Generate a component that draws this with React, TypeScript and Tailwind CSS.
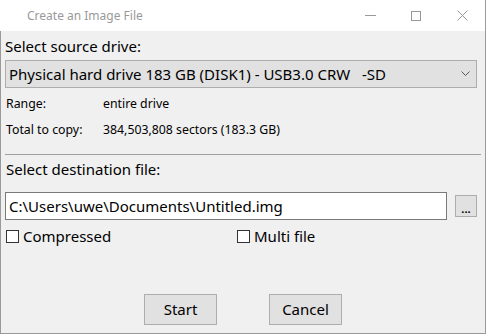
import React from "react"

const font = { fontFamily: '"Noto Sans", "Open Sans", sans-serif' }

function Checkbox({ label }: { label: string }) {
  return (
    <label className="flex items-center gap-[4px] text-[15px] leading-[20px] text-black">
      <span className="w-[13px] h-[13px] border border-[#333] bg-white" />
      {label}
    </label>
  )
}

export default function App() {
  return (
    <div className="w-[486px] h-[334px] bg-white border-r border-[#9a9a9a] flex flex-col overflow-hidden" style={font}>
      {/* title bar */}
      <div className="h-[31px] flex items-center bg-white">
        <span className="ml-[27px] text-[12px] text-[#999]">Create an Image File</span>
        <div className="ml-auto flex items-center h-full">
          <div className="w-[46px] h-full flex items-center justify-center">
            <div className="w-[11px] h-px bg-[#999]" />
          </div>
          <div className="w-[46px] h-full flex items-center justify-center">
            <div className="w-[10px] h-[10px] border border-[#999]" />
          </div>
          <div className="w-[46px] h-full flex items-center justify-center">
            <svg width="11" height="11" viewBox="0 0 11 11">
              <path d="M0.5 0.5 L10.5 10.5 M10.5 0.5 L0.5 10.5" stroke="#999" strokeWidth="1" />
            </svg>
          </div>
        </div>
      </div>

      {/* body */}
      <div className="flex-1 bg-[#f0f0f0] border-l border-b border-[#9a9a9a] pl-[4px] pr-[4px] flex flex-col">
        <div className="mt-[5px] text-[15px] leading-[20px] text-black">Select source drive:</div>
        <div className="mt-[4px] w-[472px] h-[28px] bg-[#e1e1e1] border border-[#adadad] flex items-center pl-[3px] pr-[6px]">
          <span className="text-[15px] text-black whitespace-pre">Physical hard drive 183 GB (DISK1) - USB3.0 CRW   -SD</span>
          <svg className="ml-auto" width="9" height="6" viewBox="0 0 9 6">
            <path d="M0.5 0.5 L4.5 4.5 L8.5 0.5" fill="none" stroke="#555" strokeWidth="1" />
          </svg>
        </div>

        <div className="mt-[8px] flex text-[12.3px] leading-[16px] text-black">
          <span className="w-[98px] pl-[1px]">Range:</span>
          <span>entire drive</span>
        </div>
        <div className="mt-[10px] flex text-[12.3px] leading-[16px] text-black">
          <span className="w-[98px] pl-[1px]">Total to copy:</span>
          <span>384,503,808 sectors (183.3 GB)</span>
        </div>

        <div className="mt-[16px] w-[476px] h-px bg-[#a0a0a0]" />

        <div className="mt-[4px] text-[15px] leading-[20px] text-black pl-[1px]">Select destination file:</div>

        <div className="mt-[13px] flex items-center">
          <div className="w-[442px] h-[28px] bg-white border border-[#7a7a7a] flex items-center pl-[3px]">
            <span className="text-[15px] text-black">C:\Users\uwe\Documents\Untitled.img</span>
          </div>
          <div className="ml-[8px] w-[22px] h-[22px] bg-[#e1e1e1] border border-[#adadad] flex items-end justify-center pb-[3px]">
            <span className="text-[11px] leading-[8px] font-bold text-black">...</span>
          </div>
        </div>

        <div className="mt-[6px] flex pl-[1px]">
          <div className="w-[231px]">
            <Checkbox label="Compressed" />
          </div>
          <Checkbox label="Multi file" />
        </div>

        <div className="mt-auto mb-[8px] flex justify-center gap-[52px]">
          <button className="w-[73px] h-[31px] bg-[#e1e1e1] border border-[#adadad] text-[15px] text-black">Start</button>
          <button className="w-[73px] h-[31px] bg-[#e1e1e1] border border-[#adadad] text-[15px] text-black">Cancel</button>
        </div>
      </div>
    </div>
  )
}
